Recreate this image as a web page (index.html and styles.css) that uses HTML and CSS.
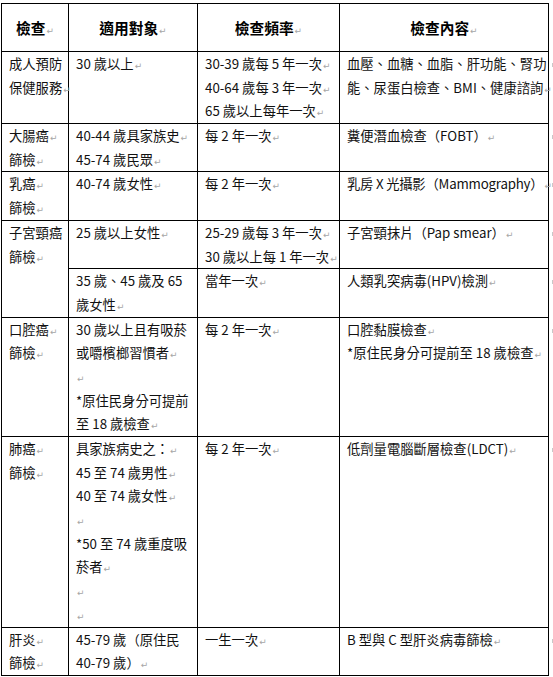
FILE: index.html
```html
<!DOCTYPE html>
<html lang="zh-Hant">
<head>
<meta charset="utf-8">
<title>健康檢查</title>
<link rel="stylesheet" href="styles.css">
</head>
<body>
<div class="page">
<table class="tbl">
  <colgroup>
    <col class="c1"><col class="c2"><col class="c3"><col class="c4">
  </colgroup>
  <tr class="head">
    <th>檢查<span class="pm">↵</span></th>
    <th>適用對象<span class="pm">↵</span></th>
    <th>檢查頻率<span class="pm">↵</span></th>
    <th>檢查內容<span class="pm">↵</span></th>
  </tr>
  <tr>
    <td>成人預防<br>保健服務<span class="pm">↵</span></td>
    <td>30 歲以上<span class="pm">↵</span></td>
    <td>30-39 歲每 5 年一次<span class="pm">↵</span><br>40-64 歲每 3 年一次<span class="pm">↵</span><br>65 歲以上每年一次<span class="pm">↵</span></td>
    <td class="last">血壓、血糖、血脂、肝功能、腎功<br>能、尿蛋白檢查、BMI、健康諮詢<span class="pm">↵</span></td>
  </tr>
  <tr>
    <td>大腸癌<span class="pm">↵</span><br>篩檢<span class="pm">↵</span></td>
    <td>40-44 歲具家族史<span class="pm">↵</span><br>45-74 歲民眾<span class="pm">↵</span></td>
    <td>每 2 年一次<span class="pm">↵</span></td>
    <td class="last">糞便潛血檢查（FOBT）<span class="pm">↵</span></td>
  </tr>
  <tr>
    <td>乳癌<span class="pm">↵</span><br>篩檢<span class="pm">↵</span></td>
    <td>40-74 歲女性<span class="pm">↵</span></td>
    <td>每 2 年一次<span class="pm">↵</span></td>
    <td class="last"><span class="tight">乳房 X 光攝影（Mammography）</span><span class="pm">↵</span></td>
  </tr>
  <tr>
    <td rowspan="2">子宮頸癌<br>篩檢<span class="pm">↵</span></td>
    <td>25 歲以上女性<span class="pm">↵</span></td>
    <td>25-29 歲每 3 年一次<span class="pm">↵</span><br>30 歲以上每 1 年一次<span class="pm">↵</span></td>
    <td class="last">子宮頸抹片（Pap smear）<span class="pm">↵</span></td>
  </tr>
  <tr>
    <td>35 歲、45 歲及 65<br>歲女性<span class="pm">↵</span></td>
    <td>當年一次<span class="pm">↵</span></td>
    <td class="last">人類乳突病毒(HPV)檢測<span class="pm">↵</span></td>
  </tr>
  <tr>
    <td>口腔癌<span class="pm">↵</span><br>篩檢<span class="pm">↵</span></td>
    <td>30 歲以上且有吸菸<br>或嚼檳榔習慣者<span class="pm">↵</span><br><span class="pm">↵</span><br>*原住民身分可提前<br>至 18 歲檢查<span class="pm">↵</span></td>
    <td>每 2 年一次<span class="pm">↵</span></td>
    <td class="last">口腔黏膜檢查<span class="pm">↵</span><br>*原住民身分可提前至 18 歲檢查<span class="pm">↵</span></td>
  </tr>
  <tr>
    <td>肺癌<span class="pm">↵</span><br>篩檢<span class="pm">↵</span></td>
    <td>具家族病史之：<span class="pm">↵</span><br>45 至 74 歲男性<span class="pm">↵</span><br>40 至 74 歲女性<span class="pm">↵</span><br><span class="pm">↵</span><br>*50 至 74 歲重度吸<br>菸者<span class="pm">↵</span><br><span class="pm">↵</span><br><span class="pm">↵</span></td>
    <td>每 2 年一次<span class="pm">↵</span></td>
    <td class="last">低劑量電腦斷層檢查(LDCT)<span class="pm">↵</span></td>
  </tr>
  <tr>
    <td>肝炎<span class="pm">↵</span><br>篩檢<span class="pm">↵</span></td>
    <td>45-79 歲（原住民<br>40-79 歲）<span class="pm">↵</span></td>
    <td>一生一次<span class="pm">↵</span></td>
    <td class="last">B 型與 C 型肝炎病毒篩檢<span class="pm">↵</span></td>
  </tr>
</table>
</div>
</body>
</html>
```

FILE: styles.css
```css
html, body {
  margin: 0;
  padding: 0;
  background: #ffffff;
}

.page {
  padding: 3px 0 0 1px;
  font-family: "Noto Sans CJK TC", "Noto Sans", sans-serif;
  color: #111111;
}

.tbl {
  border-collapse: collapse;
  table-layout: fixed;
  width: 547px;
  font-size: 13.3px;
  line-height: 23.68px;
}

.c1 { width: 67px; }
.c2 { width: 129px; }
.c3 { width: 142px; }
.c4 { width: 209px; }

.tbl th,
.tbl td {
  border: 1px solid #000000;
  padding: 0 4px 0 7px;
  white-space: nowrap;
  overflow: visible;
}

.tbl td {
  vertical-align: top;
  text-align: left;
  font-weight: normal;
}

.tbl td.last {
  position: relative;
}

.tbl td.last::after {
  content: "";
  position: absolute;
  right: -6px;
  top: 11px;
  width: 2px;
  height: 4px;
  background: #c8c8c8;
}

.head th {
  height: 47px;
  padding: 0 2px;
  vertical-align: middle;
  text-align: center;
  font-size: 14.7px;
  font-weight: bold;
  color: #000000;
}

.tight {
  letter-spacing: -0.2px;
}

.pm {
  font-family: "DejaVu Sans", sans-serif;
  font-size: 9px;
  line-height: 1;
  font-weight: normal;
  color: #a6a6a6;
  margin-left: 1px;
}
```
